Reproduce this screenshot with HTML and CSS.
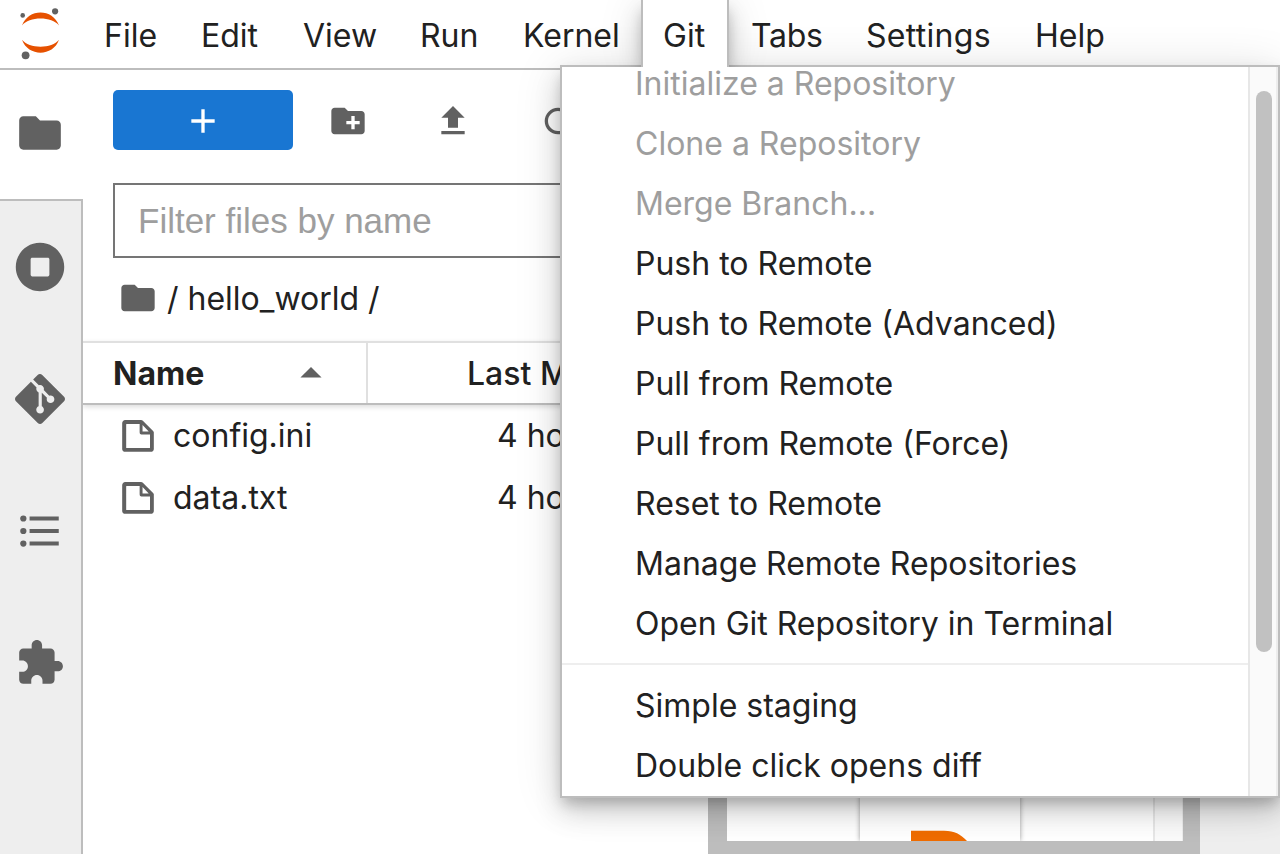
FILE: index.html
```html
<!DOCTYPE html>
<html lang="en">
<head>
<meta charset="utf-8">
<title>JupyterLab</title>
<link rel="stylesheet" href="styles.css">
</head>
<body>
<div class="app">
  <header class="menubar">
    <div class="logo">
      <svg width="80" height="68" viewBox="0 0 80 68">
        <g fill="#e65100"><path d="M22 25.5C28 8 53 8 59 25.5C52 16.2 29 16.2 22 25.5z"/><path d="M22 39.8C28 57 53 57 59 39.8C52 49 29 49 22 39.8z"/></g>
        <g fill="#616161"><circle cx="22.7" cy="15.4" r="2.3"/><circle cx="55.1" cy="11.3" r="3.1"/><circle cx="25.6" cy="55.3" r="3.9"/></g>
      </svg>
    </div>
    <div class="menu-item file">File</div>
    <div class="menu-item edit">Edit</div>
    <div class="menu-item view">View</div>
    <div class="menu-item run">Run</div>
    <div class="menu-item kernel">Kernel</div>
    <div class="menu-item git active">Git</div>
    <div class="menu-item tabs">Tabs</div>
    <div class="menu-item settings">Settings</div>
    <div class="menu-item help">Help</div>
  </header>
  <div class="body">
    <nav class="sidebar">
      <div class="side-tab current"><svg class="icon-lg" viewBox="0 0 24 24"><path d="M10 4H4c-1.1 0-1.99.9-1.99 2L2 18c0 1.1.9 2 2 2h16c1.1 0 2-.9 2-2V8c0-1.1-.9-2-2-2h-8l-2-2z"/></svg></div>
      <div class="side-tab"><svg class="icon-lg" viewBox="0 0 512 512"><path d="M256 8C119 8 8 119 8 256s111 248 248 248 248-111 248-248S393 8 256 8zm96 328c0 8.800-7.200 16-16 16H176c-8.800 0-16-7.200-16-16V176c0-8.800 7.200-16 16-16h160c8.800 0 16 7.200 16 16v160z"/></svg></div>
      <div class="side-tab"><svg class="icon-lg" viewBox="0 0 24 24"><path d="M23.546 10.93L13.067.452c-.604-.603-1.582-.603-2.188 0L8.708 2.627l2.76 2.76c.645-.215 1.379-.07 1.889.441.516.515.658 1.258.438 1.9l2.658 2.66c.645-.223 1.387-.078 1.9.435.721.72.721 1.884 0 2.604-.719.719-1.881.719-2.6 0-.539-.541-.674-1.337-.404-1.996L12.86 8.955v6.525c.176.086.342.203.488.348.713.721.713 1.883 0 2.6-.719.721-1.889.721-2.609 0-.719-.719-.719-1.879 0-2.598.182-.18.387-.316.605-.406V8.835c-.217-.091-.424-.222-.6-.401-.545-.545-.676-1.342-.396-2.009L7.636 3.7.45 10.881c-.6.605-.6 1.584 0 2.189l10.48 10.477c.604.604 1.582.604 2.186 0l10.43-10.43c.605-.603.605-1.582 0-2.187"/></svg></div>
      <div class="side-tab"><svg class="icon-lg" viewBox="0 0 24 24"><path d="M7 5h14v2H7zM7 11h14v2H7zM7 17h14v2H7z"/><circle cx="4" cy="6" r="1.5"/><circle cx="4" cy="12" r="1.500"/><circle cx="4" cy="18" r="1.500"/></svg></div>
      <div class="side-tab"><svg class="icon-lg" viewBox="0 0 24 24"><path d="M20.5 11H19V7c0-1.1-.9-2-2-2h-4V3.500C13 2.120 11.880 1 10.500 1S8 2.120 8 3.500V5H4c-1.100 0-1.990.9-1.990 2v3.800H3.500c1.490 0 2.700 1.210 2.700 2.700s-1.210 2.700-2.700 2.700H2V20c0 1.100.9 2 2 2h3.800v-1.500c0-1.490 1.210-2.700 2.700-2.700 1.490 0 2.700 1.210 2.700 2.700V22H17c1.100 0 2-.9 2-2v-4h1.500c1.380 0 2.500-1.120 2.500-2.500S21.880 11 20.500 11z"/></svg></div>
    </nav>
    <section class="browser">
      <div class="toolbar">
        <div class="new-btn"><svg class="icon" viewBox="0 0 24 24"><path d="M19 13h-6v6h-2v-6H5v-2h6V5h2v6h6v2z"/></svg></div>
        <div class="tools">
          <svg class="icon" viewBox="0 0 24 24"><path d="M20 6h-8l-2-2H4c-1.110 0-1.990.89-1.990 2L2 18c0 1.110.89 2 2 2h16c1.110 0 2-.89 2-2V8c0-1.110-.89-2-2-2zm-1 8h-3v3h-2v-3h-3v-2h3V9h2v3h3v2z"/></svg>
          <svg class="icon" viewBox="0 0 24 24"><path d="M5 20h14v-2H5v2zm0-10h4v6h6v-6h4l-7-7-7 7z"/></svg>
          <svg class="icon" viewBox="0 0 18 18"><path d="M9 13.500c-2.490 0-4.500-2.010-4.500-4.500S6.510 4.500 9 4.500c1.240 0 2.360.52 3.170 1.330L10 8h5V3l-1.760 1.760C12.150 3.680 10.660 3 9 3 5.690 3 3.010 5.690 3.010 9S5.690 15 9 15c2.970 0 5.430-2.160 5.900-5h-1.520c-.46 2-2.240 3.500-4.380 3.500z"/></svg>
        </div>
      </div>
      <div class="filter">Filter files by name</div>
      <div class="crumbs"><svg class="icon" viewBox="0 0 24 24"><path d="M10 4H4c-1.100 0-1.990.9-1.990 2L2 18c0 1.100.9 2 2 2h16c1.100 0 2-.9 2-2V8c0-1.100-.9-2-2-2h-8l-2-2z"/></svg><span>/ hello_world /</span></div>
      <div class="list-head">
        <div class="col-name"><span>Name</span><svg class="caret" viewBox="0 0 18 18"><path d="M5.200 10.600L9 6.800l3.800 3.800z"/></svg></div>
        <div class="col-mod">Last Modified</div>
      </div>
      <div class="file-list">
        <div class="file-row"><svg class="icon" viewBox="0 0 22 22"><path d="M19.300 8.200l-5.500-5.500c-.3-.3-.7-.5-1.200-.5H3.900c-.8.1-1.600.9-1.600 1.800v14.100c0 .9.7 1.600 1.600 1.600h14.200c.9 0 1.600-.7 1.600-1.600V9.400c.1-.5-.1-.9-.4-1.200zm-5.800-3.300l3.400 3.600h-3.400V4.900zm3.900 12.700H4.700c-.1 0-.2 0-.2-.2V4.700c0-.2.1-.3.2-.3h7.200v4.400s0 .8.3 1.100c.3.3 1.100.3 1.100.3h4.300v7.200s-.1.2-.2.2z"/></svg><span class="fname">config.ini</span><span class="when">4 hours ago</span></div>
        <div class="file-row"><svg class="icon" viewBox="0 0 22 22"><path d="M19.300 8.200l-5.500-5.500c-.3-.3-.7-.5-1.200-.5H3.900c-.8.1-1.600.9-1.600 1.800v14.100c0 .9.7 1.600 1.600 1.600h14.200c.9 0 1.600-.7 1.600-1.600V9.400c.1-.5-.1-.9-.4-1.200zm-5.800-3.300l3.400 3.600h-3.400V4.900zm3.900 12.700H4.700c-.1 0-.2 0-.2-.2V4.700c0-.2.1-.3.2-.3h7.200v4.400s0 .8.3 1.100c.3.3 1.100.3 1.100.3h4.300v7.200s-.1.2-.2.2z"/></svg><span class="fname">data.txt</span><span class="when">4 hours ago</span></div>
      </div>
    </section>
    <main class="work">
      <div class="launcher">
        <div class="pane">
          <div class="card"><svg width="160" height="43" viewBox="0 0 160 43"><path fill="#ef6c00" d="M51 32.700H84C95 32.700 100 36 107 43H51z"/></svg></div>
          <div class="pane-scroll"></div>
        </div>
      </div>
    </main>
  </div>
  <div class="dropdown">
    <div class="entries">
      <div class="entry disabled">Initialize a Repository</div>
      <div class="entry disabled">Clone a Repository</div>
      <div class="entry disabled">Merge Branch…</div>
      <div class="entry">Push to Remote</div>
      <div class="entry">Push to Remote (Advanced)</div>
      <div class="entry">Pull from Remote</div>
      <div class="entry">Pull from Remote (Force)</div>
      <div class="entry">Reset to Remote</div>
      <div class="entry">Manage Remote Repositories</div>
      <div class="entry">Open Git Repository in Terminal</div>
      <div class="separator"></div>
      <div class="entry">Simple staging</div>
      <div class="entry">Double click opens diff</div>
    </div>
    <div class="track"><div class="thumb"></div></div>
  </div>
</div>
</body>
</html>
```
FILE: styles.css
```css
* { box-sizing: border-box; }
body { margin: 0; overflow: hidden; }
.app {
  position: relative;
  width: 1280px;
  height: 854px;
  display: flex;
  flex-direction: column;
  overflow: hidden;
  background: #fff;
  color: #212121;
  font-family: Inter, "Liberation Sans", sans-serif;
  font-size: 32px;
  white-space: nowrap;
}
svg { display: block; flex: none; fill: #616161; }
.icon { width: 40px; height: 40px; }
.icon-lg { width: 50px; height: 50px; }

.menubar { display: flex; height: 70px; flex: none; border-bottom: 2px solid #bdbdbd; }
.logo { width: 80px; flex: none; }
.menu-item { flex: none; height: 67px; padding: 2px 0 0 20px; border: solid transparent; border-width: 0 2px; line-height: 67px; }
.file { width: 99px; padding-left: 22px; }
.edit { width: 102px; }
.view { width: 117px; }
.run { width: 103px; }
.kernel { width: 140px; }
.git { width: 88px; }
.tabs { width: 115px; letter-spacing: -.3px; }
.settings { width: 168px; letter-spacing: .3px; }
.help { width: 120px; padding-left: 21px; }
.active {
  position: relative;
  z-index: 3;
  background: #fff;
  border-color: #bdbdbd;
  box-shadow: 0 7.5px 12.5px -2.5px rgba(0,0,0,.2), 0 15px 25px rgba(0,0,0,.14), 0 2.5px 45px rgba(0,0,0,.12);
  clip-path: inset(0 -60px 0 -60px);
}

.body { display: flex; flex: 1; min-height: 0; }
.sidebar { width: 83px; flex: none; background: #eee; border-right: 2px solid #bdbdbd; }
.side-tab { height: 132px; padding: 0 0 1px 15px; display: flex; align-items: center; }
.side-tab.current { width: 83px; height: 131px; padding-bottom: 3px; background: #fff; border-bottom: 2px solid #bdbdbd; }

.browser { width: 625px; flex: none; overflow: hidden; }
.toolbar { display: flex; align-items: center; gap: 35px; height: 60px; margin: 20px 0 33px 30px; }
.new-btn { width: 180px; height: 60px; display: flex; align-items: center; justify-content: center; background: #1976d2; border-radius: 5px; padding-top: 2px; }
.new-btn svg { fill: #fff; }
.tools { display: flex; gap: 65px; padding-top: 2px; }
.filter {
  width: 640px;
  height: 75px;
  margin-left: 30px;
  padding-left: 23px;
  border: 2px solid #757575;
  color: #9e9e9e;
  font: 35px/72px "Liberation Sans", Arial, sans-serif;
}
.crumbs { display: flex; align-items: center; gap: 9px; height: 83px; padding: 0 0 3px 35px; }
.list-head { display: flex; height: 64px; border-top: 2px solid #e0e0e0; border-bottom: 2px solid #bdbdbd; box-shadow: 0 2px 5px rgba(0,0,0,.14); line-height: 62px; font-weight: 500; }
.col-name { display: flex; width: 285px; padding-left: 30px; border-right: 2px solid #e0e0e0; font-weight: 700; justify-content: space-between; }
.caret { width: 50px; height: 50px; margin: 5px 30px 0 0; }
.col-mod { width: 195px; padding-left: 99px; overflow: hidden; }
.file-row { display: flex; align-items: center; height: 62px; padding-left: 35px; line-height: 60px; }
.fname { width: 339px; padding: 0 0 1px 15px; }
.when { width: 66px; padding-bottom: 1px; overflow: hidden; }

.work { flex: 1; display: flex; background: #eee; }
.launcher { width: 492px; background: #bdbdbd; padding: 0 17px 13px 19px; }
.pane { display: flex; height: 100%; background: #fff; justify-content: space-between; overflow: hidden; }
.card { width: 160px; margin-left: 133px; box-shadow: 0 0 5px rgba(0,0,0,.4); display: flex; align-items: flex-end; }
.pane-scroll { width: 30px; background: #fafafa; border-left: 2px solid #e7e7e7; border-right: 1px solid #ededed; }

.dropdown {
  position: absolute;
  z-index: 2;
  left: 560px;
  top: 65px;
  width: 720px;
  height: 733px;
  display: flex;
  overflow: hidden;
  background: #fff;
  border: 2px solid #bdbdbd;
  box-shadow: 0 7.5px 12.5px -2.5px rgba(0,0,0,.2), 0 15px 25px rgba(0,0,0,.14), 0 2.5px 45px rgba(0,0,0,.12);
}
.entries { flex: 1; margin-top: -13px; }
.entry { height: 60px; padding-left: 73px; line-height: 60px; }
.disabled { color: #9e9e9e; }
.separator { height: 2px; margin: 9px 0 11px; background: #eee; }
.track { width: 30px; flex: none; padding: 24px 0 0 6px; background: #fafafa; border-left: 2px solid #e7e7e7; border-right: 2px solid #ededed; }
.thumb { width: 16px; height: 561px; border-radius: 8px; background: #c1c1c1; }
```
